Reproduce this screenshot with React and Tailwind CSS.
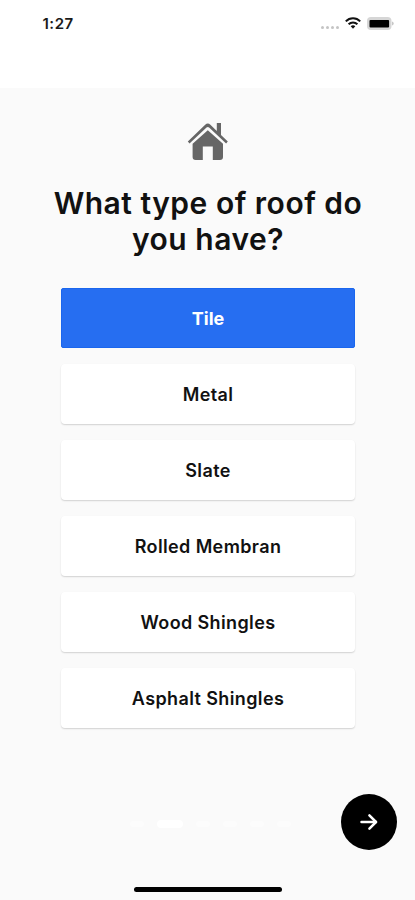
const roofTypes = [
  { label: 'Tile', selected: true },
  { label: 'Metal' },
  { label: 'Slate' },
  { label: 'Rolled Membran' },
  { label: 'Wood Shingles' },
  { label: 'Asphalt Shingles' },
]

const steps = [false, true, false, false, false, false]

function StatusBar() {
  return (
    <header className="flex h-[88px] items-start justify-between bg-white pt-[14px] pr-[20px] pl-[42.5px]">
      <span className="text-[15px] leading-5 font-semibold tracking-[0.5px] text-[#1a1a1a]">1:27</span>
      <div className="-mt-px flex h-5 items-center">
        <div className="mt-[8px] flex gap-[2px]">
          {[0, 1, 2, 3].map((dot) => (
            <span key={dot} className="h-[3px] w-[3px] rounded-full bg-[#c4c4c4]" />
          ))}
        </div>
        <svg className="ml-[6px] h-[12px] w-[16px]" viewBox="0 0 16 12" fill="none" stroke="#111" strokeWidth="2">
          <path d="M0.8 4.4C4.8 0.3 11.2 0.3 15.2 4.4" />
          <path d="M3.6 7.3C6.1 4.8 9.9 4.8 12.4 7.3" />
          <path d="M5.7 9.3C7 8 9 8 10.3 9.3L8 11.8Z" fill="#111" stroke="none" />
        </svg>
        <svg className="ml-[6px] h-[13px] w-[28px]" viewBox="0 0 28 13">
          <rect x="0" y="0" width="24.5" height="13" rx="4" fill="#d6d6d6" />
          <rect x="2.5" y="2.9" width="19.6" height="7.6" rx="1" fill="#000" />
          <path d="M25.2 4.5C27.1 5.2 27.1 7.8 25.2 8.5Z" fill="#bbb" />
        </svg>
      </div>
    </header>
  )
}

function HouseIcon() {
  return (
    <svg className="h-[38px] w-[42px]" viewBox="0 0 42 38" fill="#666">
      <path d="M0.8 19.6L18.2 2.8Q20.8 0.4 23.4 2.8L29.8 9V1H34V13.1L40.8 19.6L39.1 21.4L22.1 5.6Q20.8 4.5 19.5 5.6L2.5 21.4Z" />
      <path d="M20.8 8.2L36 21.8V35Q36 38 33 38H25.8V24.5H15.8V38H8.6Q5.6 38 5.6 35V21.8Z" />
    </svg>
  )
}

function RoofOption({ label, selected }) {
  return (
    <button
      className={
        selected
          ? 'h-[60px] w-full rounded-[2px] border border-[#1a66ee] bg-[#266ef1] text-[18px] font-bold text-white'
          : 'h-[60px] w-full rounded-[4px] bg-white text-[18px] font-semibold tracking-[0.38px] text-[#111] shadow-[0_1px_1.5px_rgba(0,0,0,0.16)]'
      }
    >
      {label}
    </button>
  )
}

export default function App() {
  return (
    <div className="flex h-[900px] w-[415px] flex-col bg-[#fafafa] font-['Inter',sans-serif]">
      <StatusBar />

      <main className="flex flex-col items-center pt-[34px] pl-px">
        <HouseIcon />
        <h1 className="mt-[25px] text-center text-[30px] leading-9 font-semibold tracking-[0.5px] whitespace-nowrap text-[#111]">
          What type of roof do
          <br />
          you have?
        </h1>
        <div className="mt-[31px] flex w-[294px] flex-col gap-4">
          {roofTypes.map((roof) => (
            <RoofOption key={roof.label} {...roof} />
          ))}
        </div>
      </main>

      <footer className="mt-auto flex flex-col">
        <div className="flex items-center justify-end pr-[18px]">
          {/* Step indicator */}
          <div className="mt-[4px] mr-[50px] flex gap-[13px]">
            {steps.map((active, i) => (
              <span
                key={i}
                className={
                  active
                    ? 'h-[8px] w-[26px] rounded-full bg-white'
                    : 'h-[6px] w-[14px] self-center rounded-full bg-[#fcfcfc]'
                }
              />
            ))}
          </div>
          <button aria-label="Next" className="flex h-14 w-14 items-center justify-center rounded-full bg-black">
            <svg
              className="h-[18px] w-[18px]"
              viewBox="0 0 18 18"
              fill="none"
              stroke="#fff"
              strokeWidth="2.5"
              strokeLinecap="round"
              strokeLinejoin="round"
            >
              <path d="M1.5 9H16" />
              <path d="M9.4 2.3L16 9L9.4 15.7" />
            </svg>
          </button>
        </div>
        {/* Home indicator */}
        <div className="mt-[37px] mb-[8px] ml-[134px] h-[5px] w-[148px] rounded-full bg-black" />
      </footer>
    </div>
  )
}
